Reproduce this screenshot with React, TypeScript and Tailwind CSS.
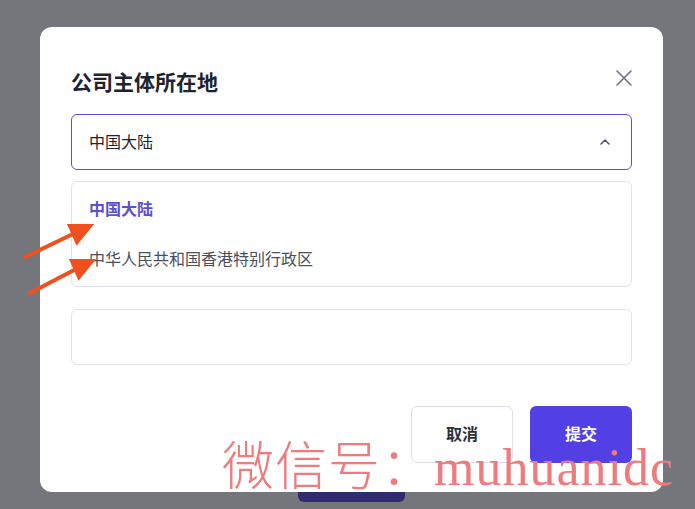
export default function App() {
  const font = { fontFamily: '"Inter", "Noto Sans CJK SC", sans-serif' };
  return (
    <div className="relative h-[509px] w-[695px] overflow-hidden bg-[#75767c]" style={font}>
      <div className="absolute left-[298px] top-[480px] h-[22px] w-[107px] rounded-md bg-[#2e2c6e]" />
      <div className="absolute left-[40px] top-[27px] h-[465px] w-[623px] rounded-xl bg-white px-[31px] pt-[40px]">
        <div className="flex items-center justify-between">
          <h2 className="text-[21px] font-semibold text-[#1f2330]">公司主体所在地</h2>
          <svg width="20" height="20" viewBox="0 0 20 20" className="mr-[-2px] mt-[-10px]" stroke="#6b7280" strokeWidth="1.6" strokeLinecap="round">
            <path d="M3 3l14 14M17 3L3 17" />
          </svg>
        </div>
        <div className="mt-[15px] flex h-[56px] items-center justify-between rounded-md border-[1.5px] border-[#5b4fd6] px-[17px]">
          <span className="text-[16px] text-[#1f2330]">中国大陆</span>
          <svg width="14" height="14" viewBox="0 0 14 14" fill="none" stroke="#4b5563" strokeWidth="1.5" strokeLinecap="round" strokeLinejoin="round" className="mr-[2px]">
            <path d="M3 9l4-4 4 4" />
          </svg>
        </div>
        <div className="mt-[11px] flex h-[106px] flex-col justify-center gap-[26px] rounded-md border border-[#e1e3ec] px-[17px]">
          <span className="text-[16px] font-semibold text-[#5b4fd6]">中国大陆</span>
          <span className="text-[16px] text-[#4b4f5c]">中华人民共和国香港特别行政区</span>
        </div>
        <div className="mt-[22px] h-[56px] rounded-md border border-[#e1e3ec]" />
        <div className="mt-[41px] flex justify-end gap-[17px]">
          <button className="h-[57px] w-[102px] rounded-md border border-[#dcdfe8] bg-white text-[16px] font-semibold text-[#2b2f3a]">取消</button>
          <button className="h-[57px] w-[102px] rounded-md bg-[#5340e4] text-[16px] font-semibold text-white">提交</button>
        </div>
      </div>
      <svg className="absolute left-0 top-0" width="695" height="509">
        <g fill="#f0501e" stroke="#f0501e" strokeWidth="4" strokeLinecap="round">
          <line x1="25" y1="257" x2="75" y2="233" />
          <polygon points="90,226 70,226 77,242" />
          <line x1="30" y1="293" x2="78" y2="268" />
          <polygon points="92,261 72,261 79,277" />
        </g>
      </svg>
      <div className="absolute left-[222px] top-[442px] whitespace-nowrap text-[52px] font-light leading-none tracking-[1px] text-[#ef7b7e]" style={{ fontFamily: '"Liberation Serif", "Noto Sans CJK SC", serif' }}>
        微信号：muhuanidc
      </div>
    </div>
  );
}
